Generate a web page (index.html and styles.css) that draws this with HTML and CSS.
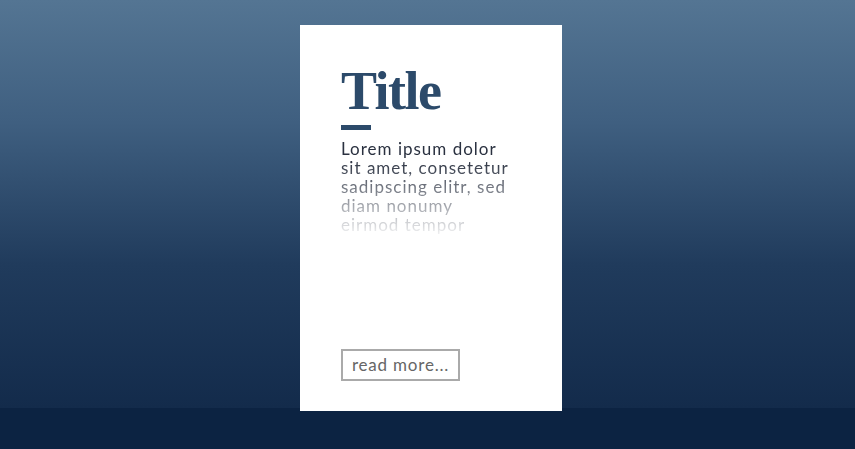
FILE: index.html
```html
<!DOCTYPE html>
<html>

<head>
    <meta charset="UTF-8">
    <meta name="viewport" content="width=device-width, initial-scale=1.0">
    <title>Card</title>
    <link rel="stylesheet" href="styles.css">
</head>

<body>

    <div class="stage">
        <div class="card">
            <h1 class="title">Title</h1>
            <div class="bar"></div>
            <p class="text">Lorem ipsum dolor sit amet, consetetur sadipscing elitr, sed diam nonumy eirmod tempor</p>
            <div class="btn">read more...</div>
        </div>
    </div>

</body>

</html>
```

FILE: styles.css
```css
* {
    margin: 0;
    padding: 0;
    box-sizing: border-box;
}

html {
    background-color: #0c2342;
}

body {
    height: 449px;
    overflow: hidden;
    font-family: "Lato", "Noto Sans", sans-serif;
}

.stage {
    height: 408px;
    background: linear-gradient(to bottom, #547593 0%, #3f5f80 30%, #203b5c 65%, #132b4b 100%);
    padding-top: 25px;
}

.card {
    width: 262px;
    height: 386px;
    margin-left: 300px;
    background-color: #fff;
    padding: 37px 41px 0;
    display: flex;
    flex-direction: column;
    align-items: flex-start;
}

.title {
    font-family: "Liberation Serif", "DejaVu Serif", serif;
    font-size: 54px;
    font-weight: bold;
    line-height: 58px;
    color: #2c4a6a;
    letter-spacing: -1.5px;
}

.bar {
    width: 30px;
    height: 5px;
    margin-top: 5px;
    background-color: #2c4a6a;
}

/* fades out towards the bottom */
.text {
    width: 172px;
    margin-top: 9px;
    height: 95px;
    overflow: hidden;
    font-size: 17px;
    line-height: 19px;
    letter-spacing: 1px;
    color: #2a3140;
    -webkit-mask-image: linear-gradient(to bottom, #000 22%, rgba(0, 0, 0, 0.08) 100%);
    mask-image: linear-gradient(to bottom, #000 22%, rgba(0, 0, 0, 0.08) 100%);
}

.btn {
    margin-top: auto;
    margin-bottom: 30px;
    width: 119px;
    height: 32px;
    line-height: 28px;
    border: 2px solid #aaa;
    color: #666;
    font-size: 17px;
    letter-spacing: 0.8px;
    text-align: center;
}
```
